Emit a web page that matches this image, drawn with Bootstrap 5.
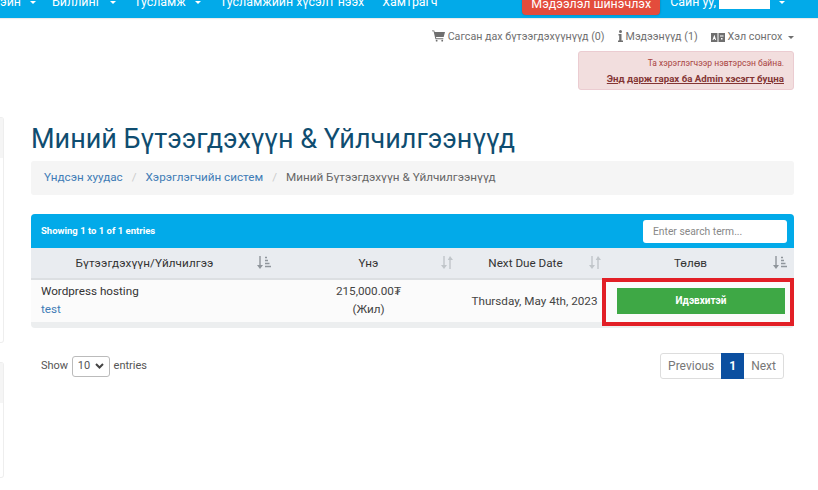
<!DOCTYPE html>
<html lang="mn">
<head>
<meta charset="utf-8">
<title>Миний Бүтээгдэхүүн</title>
<link href="https://cdn.jsdelivr.net/npm/bootstrap@5.3.0/dist/css/bootstrap.min.css" rel="stylesheet">
<style>
html,body{height:490px;overflow:hidden}
body{font-family:Roboto,"Liberation Sans",sans-serif;font-size:12px;color:#333;background:#fff}
.topbar{height:18px;background:#02aae9;overflow:hidden;color:#fff;box-shadow:0 1px 1px rgba(0,0,0,.08)}
.topbar-inner{margin-top:-9px;font-size:12.4px;line-height:22px;white-space:nowrap;gap:18px;padding-right:33px}
.topbar-inner .nav-first{margin-right:-2px}
.topbar-inner .nav-third{margin-right:1px}
.caret-down{display:inline-block;border-top:3.5px solid currentColor;border-left:3.5px solid transparent;border-right:3.5px solid transparent;vertical-align:middle;margin-left:6px}
.update-btn{margin-left:auto;margin-right:-8px;background:#e34c3c;color:#fff;border-radius:4px;height:24px;width:138px;text-align:center;line-height:25px;box-shadow:0 0 2px rgba(0,0,0,.3)}
.whiteout{display:inline-block;background:#fff;width:51px;height:12px;vertical-align:middle;margin-left:3px}
.page-wrap{align-items:flex-start}
.side-col{width:4px;margin-right:27px;padding-top:99px}
.side-stub{border:1px solid #eeeeee;border-left:0;border-radius:0 3px 3px 0;background:#fff}
.side-stub i{display:block;background:#f5f5f5;height:40px}
.stub-a{height:226px;margin-bottom:19px}
.stub-b{height:116px}
.main-col{width:763px}
.util-links{height:33px;padding-top:12px;font-size:10.7px;line-height:14px;color:#6f6f6f;gap:13px}
.util-links svg{vertical-align:-2px;margin-right:3px}
.util-links .caret-down{margin-left:3px}
.login-note{margin-left:auto;width:216px;height:39px;background:#f2dede;border:1px solid #ebccd1;border-radius:3px;color:#a94442;font-size:8.5px;text-align:right;padding:4px 9px 0 0;line-height:15px}
.login-note a{display:block;color:#843534;font-size:9.7px;font-weight:700;text-decoration:underline}
.page-head{font-size:27px;color:#0f4d70;font-weight:400;margin:34px 0 0;line-height:30px;height:30px}
.crumbs{margin:7px 0 0;height:34px;background:#f5f5f5;border-radius:3px;padding:0 13px;font-size:11.7px;align-items:center;--bs-breadcrumb-margin-bottom:0;--bs-breadcrumb-divider-color:#ccc;--bs-breadcrumb-item-active-color:#666;--bs-breadcrumb-item-padding-x:9px}
.crumbs a{color:#3f7cb6;text-decoration:none}
.data-box{margin-top:19px;border-radius:4px;background:#eceeef;height:114px;position:relative}
.box-head{height:34px;background:#02aae9;border-radius:4px 4px 0 0;color:#fff;padding:0 7px 0 10px;font-size:9.5px;font-weight:700}
.search-box{width:144px;height:23px;background:#fff;border-radius:3px;color:#888;font-size:10.3px;font-weight:400;line-height:23px;padding-left:10px}
.grid-tbl{--bs-table-bg:transparent;margin:0;table-layout:fixed;width:763px;font-size:11.7px}
.grid-tbl th{height:31px;padding:1px 0 0;background:#e9ecf0;font-weight:400;color:#333;text-align:center;border-bottom:2px solid #dcdfe2;position:relative;vertical-align:middle}
.grid-tbl td{height:43px;padding:0;background:#fbfbfb;border:0;text-align:center;vertical-align:middle;line-height:18px;color:#444}
.grid-tbl td.name-cell{text-align:left;padding:0 0 2px 10px;color:#333}
.grid-tbl td.price-cell{padding-bottom:2px}
.grid-tbl th.th-name{padding-right:18px;letter-spacing:.09px}
.grid-tbl th.th-name .sort-mark{right:5px}
.grid-tbl th.th-due{padding-right:13px}
.grid-tbl th.th-due .sort-mark{right:1px}
.grid-tbl th.th-state{padding-right:16px}
.grid-tbl td.td-due{padding-left:5px}
.name-cell a{color:#3f7cb6;text-decoration:none}
.sort-mark{position:absolute;right:7px;top:8px;color:#8f959b}
.sort-mark.idle{color:#c0c5c9}
.status-btn{display:block;margin:0 9px 0 14px;height:26px;background:#3ea845;color:#fff;font-size:10px;font-weight:700;line-height:26px;text-align:center}
.red-frame{position:absolute;left:571px;top:64px;width:192px;height:48px;border:4px solid #e21f26;pointer-events:none}
.foot-row{margin-top:25px;padding:0 10px;font-size:11px;color:#555;align-items:center}
.len-select{display:inline-flex;align-items:center;gap:5px;border:1px solid #bbb;border-radius:3px;height:21px;width:38px;padding-left:5px;margin:0 1px;font-size:11px;color:#555}
.pager{--bs-pagination-padding-x:7px;--bs-pagination-padding-y:0;--bs-pagination-font-size:12px;--bs-pagination-color:#777;--bs-pagination-border-color:#ddd;--bs-pagination-active-bg:#0b4fa0;--bs-pagination-active-border-color:#0b4fa0;--bs-pagination-border-radius:3px;margin:0}
.pager .page-link{height:26px;line-height:24px}
.pager .page-link.num{font-weight:700}
</style>
</head>
<body>
<div class="topbar">
  <div class="topbar-inner d-flex">
    <span class="nav-first">эйн <b class="caret-down"></b></span>
    <span>Биллинг <b class="caret-down"></b></span>
    <span class="nav-third">Тусламж <b class="caret-down"></b></span>
    <span>Тусламжийн хүсэлт нээх</span>
    <span>Хамтрагч</span>
    <span class="update-btn">Мэдээлэл шинэчлэх</span>
    <span>Сайн уу,<span class="whiteout"></span> <b class="caret-down"></b></span>
  </div>
</div>
<div class="page-wrap d-flex">
<div class="side-col">
  <div class="side-stub stub-a"><i></i></div>
  <div class="side-stub stub-b"><i></i></div>
</div>
<div class="main-col">
  <div class="util-links d-flex justify-content-end">
    <span><svg width="13" height="12" viewBox="0 0 14 12"><path fill="#6f6f6f" d="M0 0h2.400l.5 1.600H14l-1.400 5.600H4.300l.3 1.200h7.600v1H3.700L1.700 1H0z"/><circle cx="5" cy="11" r="1" fill="#6f6f6f"/><circle cx="11" cy="11" r="1" fill="#6f6f6f"/></svg>Сагсан дах бүтээгдэхүүнүүд (0)</span>
    <span><svg width="5" height="12" viewBox="0 0 5 12"><circle cx="2.500" cy="1.500" r="1.500" fill="#6f6f6f"/><path fill="#6f6f6f" d="M.5 4h3v6.500H5V12H0v-1.500h1.200V5.400H.5z"/></svg>Мэдээнүүд (1)</span>
    <span><svg width="14" height="9" viewBox="0 0 14 9"><path fill="#6f6f6f" d="M0 0h6.500v9H0zM7.500 0H14v9H7.500z"/><path fill="#fff" d="M3.200 2 1.500 7h1l.3-1h1l.3 1h1L3.500 2zM9 2.500h3.500v1H9zM10 5h1.500v1.500H10z"/></svg>Хэл сонгох <b class="caret-down"></b></span>
  </div>
  <div class="login-note">Та хэрэглэгчээр нэвтэрсэн байна.<a href="#">Энд дарж гарах ба Admin хэсэгт буцна</a></div>
  <h1 class="page-head">Миний Бүтээгдэхүүн &amp; Үйлчилгээнүүд</h1>
  <ol class="breadcrumb crumbs">
    <li class="breadcrumb-item"><a href="#">Үндсэн хуудас</a></li>
    <li class="breadcrumb-item"><a href="#">Хэрэглэгчийн систем</a></li>
    <li class="breadcrumb-item active">Миний Бүтээгдэхүүн &amp; Үйлчилгээнүүд</li>
  </ol>
  <div class="data-box">
    <div class="box-head d-flex align-items-center justify-content-between">
      <span>Showing 1 to 1 of 1 entries</span>
      <div class="search-box">Enter search term...</div>
    </div>
    <table class="table grid-tbl">
      <colgroup><col style="width:245px"><col style="width:185px"><col style="width:142px"><col style="width:191px"></colgroup>
      <thead><tr>
        <th class="th-name">Бүтээгдэхүүн/Үйлчилгээ
          <svg class="sort-mark" width="14" height="13" viewBox="0 0 14 13"><path fill="currentColor" d="M2.300 0h1.400v9H6L3 13 0 9h2.300z"/><path stroke="currentColor" stroke-width="1.300" d="M8 1.500h2M8 4.500h3M8 7.500h4.500M8 10.500h6"/></svg></th>
        <th>Үнэ
          <svg class="sort-mark idle" width="13" height="13" viewBox="0 0 13 13"><path fill="currentColor" d="M2.300 0h1.400v9H6L3 13 0 9h2.300zM8.300 13h1.400V4H12L9 0 6.800 4h1.500z"/></svg></th>
        <th class="th-due">Next Due Date
          <svg class="sort-mark idle" width="13" height="13" viewBox="0 0 13 13"><path fill="currentColor" d="M2.300 0h1.400v9H6L3 13 0 9h2.300zM8.300 13h1.400V4H12L9 0 6.800 4h1.500z"/></svg></th>
        <th class="th-state">Төлөв
          <svg class="sort-mark" width="14" height="13" viewBox="0 0 14 13"><path fill="currentColor" d="M2.300 0h1.400v9H6L3 13 0 9h2.300z"/><path stroke="currentColor" stroke-width="1.300" d="M8 1.500h2M8 4.500h3M8 7.500h4.500M8 10.500h6"/></svg></th>
      </tr></thead>
      <tbody><tr>
        <td class="name-cell">Wordpress hosting<br><a href="#">test</a></td>
        <td class="price-cell">215,000.00₮<br>(Жил)</td>
        <td class="td-due">Thursday, May 4th, 2023</td>
        <td><span class="status-btn">Идэвхитэй</span></td>
      </tr></tbody>
    </table>
    <div class="red-frame"></div>
  </div>
  <div class="foot-row d-flex justify-content-between">
    <div>Show <span class="len-select">10 <svg width="9" height="6" viewBox="0 0 9 6"><path fill="none" stroke="#444" stroke-width="2" d="M1 1l3.500 3.500L8 1"/></svg></span> entries</div>
    <ul class="pagination pager">
      <li class="page-item"><a class="page-link" href="#">Previous</a></li>
      <li class="page-item active"><a class="page-link num" href="#">1</a></li>
      <li class="page-item"><a class="page-link" href="#">Next</a></li>
    </ul>
  </div>
</div>
</div>
<script src="https://cdn.jsdelivr.net/npm/bootstrap@5.3.0/dist/js/bootstrap.bundle.min.js"></script>
</body>
</html>
